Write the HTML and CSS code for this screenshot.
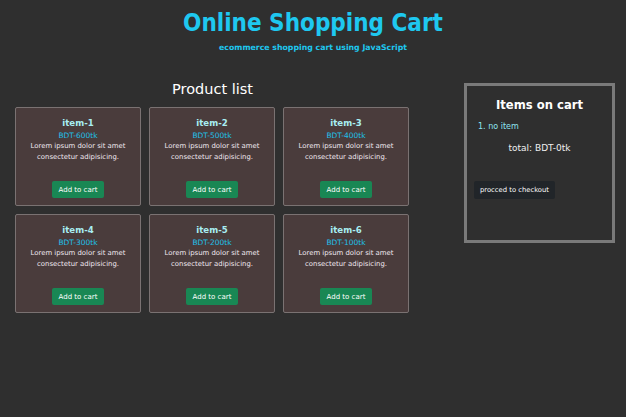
FILE: index.html
```html
<!DOCTYPE html>
<html>
<head>
<meta charset="utf-8">
<link rel="stylesheet" href="styles.css">
</head>
<body>
<header class="header">
  <h1 class="title">Online Shopping Cart</h1>
  <p class="subtitle">ecommerce shopping cart using JavaScript</p>
</header>
<main class="main">
  <section class="products">
    <h2 class="products-title">Product list</h2>
    <div class="grid">
      <div class="card"><h3 class="card-name">item-1</h3><p class="card-price">BDT-600tk</p><p class="card-desc">Lorem ipsum dolor sit amet consectetur adipisicing.</p><button class="btn-add">Add to cart</button></div>
      <div class="card"><h3 class="card-name">item-2</h3><p class="card-price">BDT-500tk</p><p class="card-desc">Lorem ipsum dolor sit amet consectetur adipisicing.</p><button class="btn-add">Add to cart</button></div>
      <div class="card"><h3 class="card-name">item-3</h3><p class="card-price">BDT-400tk</p><p class="card-desc">Lorem ipsum dolor sit amet consectetur adipisicing.</p><button class="btn-add">Add to cart</button></div>
      <div class="card"><h3 class="card-name">item-4</h3><p class="card-price">BDT-300tk</p><p class="card-desc">Lorem ipsum dolor sit amet consectetur adipisicing.</p><button class="btn-add">Add to cart</button></div>
      <div class="card"><h3 class="card-name">item-5</h3><p class="card-price">BDT-200tk</p><p class="card-desc">Lorem ipsum dolor sit amet consectetur adipisicing.</p><button class="btn-add">Add to cart</button></div>
      <div class="card"><h3 class="card-name">item-6</h3><p class="card-price">BDT-100tk</p><p class="card-desc">Lorem ipsum dolor sit amet consectetur adipisicing.</p><button class="btn-add">Add to cart</button></div>
    </div>
  </section>
  <aside class="cart">
    <h2 class="cart-title">Items on cart</h2>
    <ol class="cart-list"><li>no item</li></ol>
    <p class="cart-total">total: BDT-0tk</p>
    <button class="btn-checkout">procced to checkout</button>
  </aside>
</main>
</body>
</html>
```
FILE: styles.css
```css
* { box-sizing: border-box; }
body {
  margin: 0;
  background: #2f2f2f;
  font-family: "Comic Sans MS", "DejaVu Sans", sans-serif;
  color: #f0f0f0;
}
.header { text-align: center; padding-top: 7px; }
.title {
  margin: 0;
  font-family: "Comic Sans MS", "DejaVu Sans Condensed", "DejaVu Sans", sans-serif;
  font-stretch: condensed;
  font-size: 24px;
  line-height: 32px;
  font-weight: bold;
  color: #1ec8f0;
}
.subtitle {
  margin: 3px 0 0 0;
  font-size: 7.8px;
  line-height: 12px;
  font-weight: bold;
  color: #1ec8f0;
}
.main { display: flex; align-items: flex-start; padding-top: 29px; }
.products { margin-left: 15px; width: 395px; }
.products-title {
  margin: -4px 0 0 0;
  text-align: center;
  font-size: 14.5px;
  line-height: 20px;
  font-weight: normal;
  color: #ffffff;
  padding-bottom: 8px;
}
.grid { display: grid; grid-template-columns: repeat(3, 126px); gap: 8px; }
.card {
  height: 99px;
  background: #4a3c3c;
  border: 1px solid #7a7272;
  border-radius: 2px;
  text-align: center;
  padding-top: 9px;
  display: flex;
  flex-direction: column;
  align-items: center;
}
.card-name { margin: 0; font-size: 8.6px; line-height: 13px; font-weight: bold; color: #a8eef2; }
.card-price { margin: 0; font-size: 7.5px; line-height: 11px; color: #1ec0ea; }
.card-desc { margin: 0; font-size: 6.9px; line-height: 11px; color: #f0e8f0; width: 115px; }
.btn-add {
  margin-top: 18px;
  width: 52px; height: 17px;
  border: none; border-radius: 2px;
  background: #198754;
  color: #ffffff;
  font-family: inherit;
  font-size: 7px;
  padding: 0;
}
.cart {
  margin-left: 54px;
  width: 151px;
  height: 160px;
  border: 3px solid #7a7a7a;
  padding: 9px 7px 0 7px;
}
.cart-title { margin: 0; text-align: center; font-size: 11.6px; line-height: 20px; font-weight: bold; color: #ffffff; }
.cart-list { margin: 6px 0 0 0; padding-left: 4px; list-style-position: inside; font-size: 8px; line-height: 12px; color: #8ee4f0; }
.cart-total { margin: 9px 0 0 0; text-align: center; font-size: 9px; line-height: 12px; color: #f0f0f0; }
.btn-checkout {
  margin-top: 27px;
  height: 18px;
  width: 81px;
  border: none; border-radius: 2px;
  background: #212529;
  color: #ffffff;
  font-family: inherit;
  font-size: 6.8px;
  padding: 0;
}
```
